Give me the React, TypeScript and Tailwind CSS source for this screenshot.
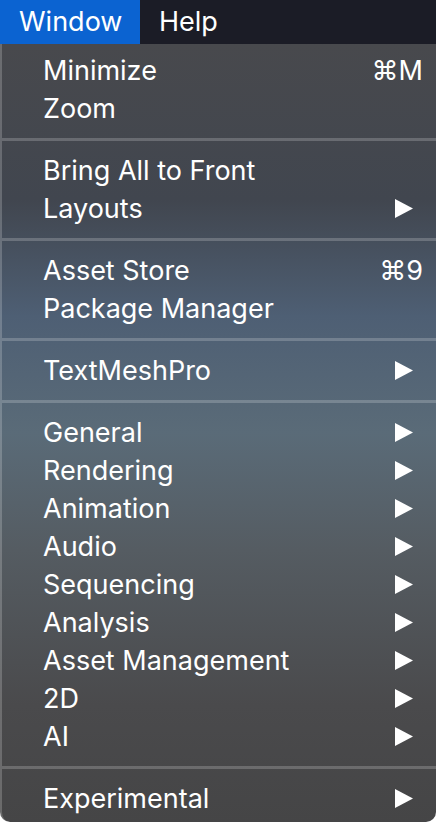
import React from "react";

type Item = { label: string; shortcut?: string; sub?: boolean };
const groups: Item[][] = [
  [{ label: "Minimize", shortcut: "⌘M" }, { label: "Zoom" }],
  [{ label: "Bring All to Front" }, { label: "Layouts", sub: true }],
  [{ label: "Asset Store", shortcut: "⌘9" }, { label: "Package Manager" }],
  [{ label: "TextMeshPro", sub: true }],
  [
    { label: "General", sub: true },
    { label: "Rendering", sub: true },
    { label: "Animation", sub: true },
    { label: "Audio", sub: true },
    { label: "Sequencing", sub: true },
    { label: "Analysis", sub: true },
    { label: "Asset Management", sub: true },
    { label: "2D", sub: true },
    { label: "AI", sub: true },
  ],
  [{ label: "Experimental", sub: true }],
];

function Arrow() {
  return (
    <svg width="18" height="19" viewBox="0 0 18 19" className="mr-[23px]">
      <polygon points="0,0 18,9.5 0,19" fill="#ffffff" />
    </svg>
  );
}

export default function App() {
  return (
    <div
      className="w-[436px] h-[824px] bg-white overflow-hidden"
      style={{ fontFamily: "Inter, 'Liberation Sans', 'DejaVu Sans', sans-serif" }}
    >
      <div className="h-[44px] bg-[#1b1c26] flex items-stretch text-white text-[27px]">
        <div className="w-[140px] bg-[#0b63d1] flex items-center pl-[19px]">Window</div>
        <div className="flex items-center pl-[19px]">Help</div>
      </div>
      <div className="h-[778px] rounded-b-[10px] border-l-2 border-white/20 bg-[linear-gradient(to_bottom,#48494d_0%,#41464f_20%,#4e5f74_35%,#5a6b78_50%,#555c62_65%,#4a4a4c_85%,#454546_100%)] pt-[7px] text-white text-[27px]">
        {groups.map((g, gi) => (
          <div key={gi}>
            {gi > 0 && (
              <div className="h-[24px] flex items-center">
                <div className="h-[3px] w-full bg-white/20" />
              </div>
            )}
            {g.map((it) => (
              <div key={it.label} className="h-[38px] flex items-center justify-between pl-[41px]">
                <span className="leading-none">{it.label}</span>
                {it.shortcut && (
                  <span className="mr-[13px] leading-none" style={{ fontFamily: "Inter, 'DejaVu Sans', sans-serif" }}>
                    {it.shortcut}
                  </span>
                )}
                {it.sub && <Arrow />}
              </div>
            ))}
          </div>
        ))}
      </div>
    </div>
  );
}
